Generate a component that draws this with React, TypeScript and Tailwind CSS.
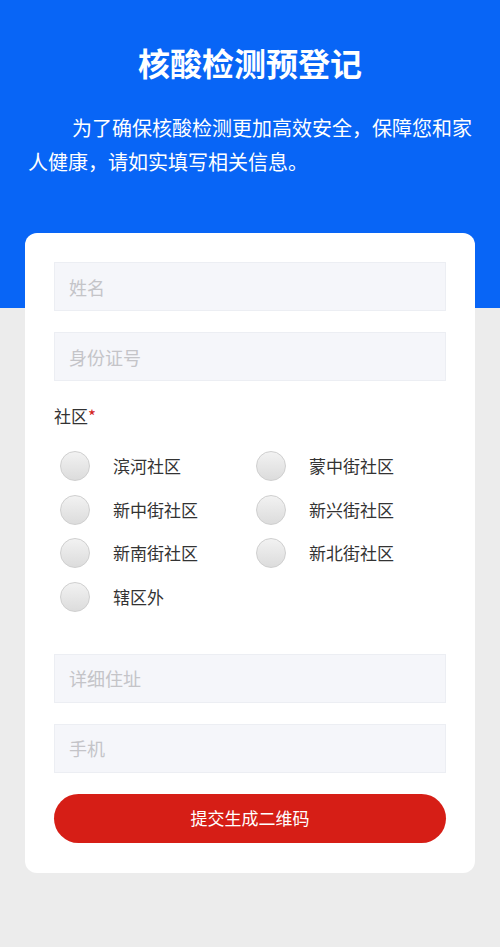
const font = { fontFamily: '"Noto Sans CJK SC", "Noto Sans", sans-serif' };

const communities = ['滨河社区', '蒙中街社区', '新中街社区', '新兴街社区', '新南街社区', '新北街社区', '辖区外'];

function Field({ placeholder }: { placeholder: string }) {
  return (
    <input
      placeholder={placeholder}
      className="block h-[49px] w-full border border-[#eceef3] bg-[#f5f6fa] pl-[14px] text-[18px] text-[#333] outline-none placeholder:text-[#c4c4c8]"
    />
  );
}

export default function App() {
  return (
    <div className="min-h-[947px] bg-[#ececec]" style={font}>
      <div className="bg-[#0865f6] pb-[129px] pl-[28px] pr-[20px] pt-[42px]">
        <h1 className="pr-[8px] text-center text-[32px] font-bold leading-[40px] text-white">核酸检测预登记</h1>
        <p className="mt-[29px] indent-[44px] text-[20px] leading-[34px] text-white">
          为了确保核酸检测更加高效安全，保障您和家人健康，请如实填写相关信息。
        </p>
      </div>

      <div className="mx-[25px] -mt-[75px] rounded-[12px] bg-white px-[29px] pb-[30px] pt-[29px]">
        <Field placeholder="姓名" />
        <div className="mt-[21px]">
          <Field placeholder="身份证号" />
        </div>

        <div className="mt-[23px] text-[17px] leading-[24px] text-[#333]">
          社区<span className="text-[#d3231b]">*</span>
        </div>

        <div className="mt-[23px] grid grid-cols-[196px_1fr] gap-y-[13.5px] pl-[6px]">
          {communities.map((name) => (
            <label key={name} className="flex h-[30px] items-center">
              <span className="h-[30px] w-[30px] shrink-0 rounded-full border border-[#cfcfcf] bg-gradient-to-b from-[#f2f2f2] to-[#dcdcdc]" />
              <span className="ml-[23px] text-[17px] text-[#333]">{name}</span>
            </label>
          ))}
        </div>

        <div className="mt-[42px]">
          <Field placeholder="详细住址" />
        </div>
        <div className="mt-[21px]">
          <Field placeholder="手机" />
        </div>

        <button className="mt-[21px] block h-[49px] w-full rounded-full bg-[#d61e16] text-[17px] text-white">
          提交生成二维码
        </button>
      </div>
    </div>
  );
}
